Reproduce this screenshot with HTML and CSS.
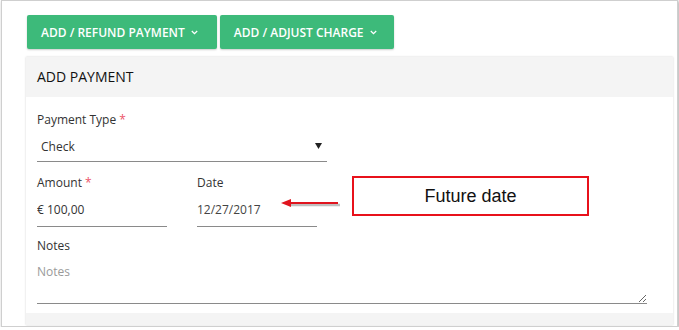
FILE: index.html
```html
<!DOCTYPE html>
<html lang="en">
<head>
    <meta charset="UTF-8">
    <meta name="viewport" content="width=device-width, initial-scale=1.0">
    <title>Add Payment</title>
    <link rel="stylesheet" href="styles.css">
</head>
<body>
    <div class="frame">

        <div class="actions">
            <button class="btn-green">ADD / REFUND PAYMENT
                <svg class="chevron" width="7" height="5" viewBox="0 0 7 5"><polyline points="0.8,1 3.5,3.6 6.2,1" fill="none" stroke="#fff" stroke-width="1.3"/></svg>
            </button>
            <button class="btn-green btn-narrow">ADD / ADJUST CHARGE
                <svg class="chevron" width="7" height="5" viewBox="0 0 7 5"><polyline points="0.8,1 3.5,3.6 6.2,1" fill="none" stroke="#fff" stroke-width="1.3"/></svg>
            </button>
        </div>

        <div class="card">
            <div class="card-header">ADD PAYMENT</div>

            <div class="card-body">
                <div class="field field-type">
                    <label>Payment Type <span class="req">*</span></label>
                    <div class="select-box">
                        <span>Check</span>
                        <svg width="7" height="6" viewBox="0 0 7 6"><polygon points="0,0 7,0 3.5,6" fill="#222"/></svg>
                    </div>
                </div>

                <div class="row">
                    <div class="field field-amount">
                        <label for="amount">Amount <span class="req">*</span></label>
                        <input type="text" id="amount" value="€ 100,00">
                    </div>
                    <div class="field field-date">
                        <label for="date">Date</label>
                        <input type="text" id="date" value="12/27/2017">
                    </div>
                </div>

                <div class="field field-notes">
                    <label for="notes">Notes</label>
                    <textarea id="notes" placeholder="Notes"></textarea>
                </div>
            </div>

            <div class="card-footer"></div>
        </div>

        <!-- annotation drawn over the screenshot -->
        <svg class="note-arrow" width="64" height="14" viewBox="0 0 64 14">
            <line x1="9" y1="8" x2="60" y2="8" stroke="rgba(0,0,0,0.25)" stroke-width="2.5"/>
            <line x1="8" y1="6" x2="58" y2="6" stroke="#e0141e" stroke-width="2"/>
            <polygon points="1,6 11,2 11,10" fill="#e0141e"/>
        </svg>
        <div class="note-box">Future date</div>

    </div>
</body>
</html>
```

FILE: styles.css
```css
*{
    margin: 0;
    padding: 0;
    box-sizing: border-box;
}
body{
    background-color: white;
    font-family: 'Open Sans', 'Liberation Sans', Arial, sans-serif;
    color: #333;
}
.frame{
    position: relative;
    width: 677px;
    height: 327px;
    margin-left: 1px;
    border: 1px solid #cfcfcf;
    box-shadow: 1px 1px 3px rgba(0, 0, 0, 0.35);
    padding: 14px 4px 0 24px;
    overflow: hidden;
    background-color: white;
}
.actions{
    display: flex;
    gap: 3px;
    padding-left: 1px;
}
.btn-green{
    display: flex;
    align-items: center;
    height: 34px;
    padding: 0 19px 0 14px;
    border: none;
    border-radius: 2px;
    background-color: #3dba7a;
    color: white;
    font-family: 'Open Sans', Arial, sans-serif;
    font-size: 12px;
    font-weight: 600;
    box-shadow: 0 1px 2px rgba(0, 0, 0, 0.2);
    cursor: pointer;
}
.btn-narrow{
    padding-right: 17px;
}
.chevron{
    margin-left: 6px;
}
.card{
    margin-top: 8px;
    background-color: white;
    box-shadow: 0 0 2px rgba(0, 0, 0, 0.18);
}
.card-header{
    height: 40px;
    padding-left: 11px;
    background-color: #f4f4f4;
    color: #111;
    font-size: 14px;
    line-height: 40px;
}
.card-body{
    padding: 15px 11px 9px 11px;
}
.field label{
    display: block;
    font-size: 12px;
    line-height: 16px;
    color: #333;
}
.req{
    color: #ec5468;
}
.select-box{
    display: flex;
    justify-content: space-between;
    align-items: center;
    width: 290px;
    height: 34px;
    padding: 3px 5px 0 4px;
    border-bottom: 1px solid #8a8a8a;
    font-size: 12px;
    color: #333;
}
.row{
    display: flex;
    gap: 30px;
    margin-top: 13px;
}
.field input{
    display: block;
    height: 36px;
    padding: 2px 0 0 0;
    border: none;
    border-bottom: 1px solid #8a8a8a;
    outline: none;
    font-family: 'Open Sans', Arial, sans-serif;
    font-size: 12px;
    color: #333;
    background: transparent;
}
.field-amount input{
    width: 130px;
}
.field-date input{
    width: 120px;
    color: #444;
}
.field-notes{
    margin-top: 11px;
}
.field-notes textarea{
    display: block;
    width: 610px;
    height: 50px;
    padding: 10px 0 0 0;
    border: none;
    border-bottom: 1px solid #8a8a8a;
    outline: none;
    resize: vertical;
    font-family: 'Open Sans', Arial, sans-serif;
    font-size: 12px;
    line-height: 16px;
    color: #333;
}
.field-notes textarea::placeholder{
    color: #9a9a9a;
}
.card-footer{
    height: 12px;
    background-color: #f4f4f4;
}
.note-arrow{
    position: absolute;
    left: 278px;
    top: 196px;
}
.note-box{
    position: absolute;
    left: 350px;
    top: 175px;
    width: 237px;
    height: 40px;
    border: 2px solid #e8111b;
    background-color: white;
    font-family: 'Liberation Sans', Arial, sans-serif;
    font-size: 18px;
    line-height: 36px;
    text-align: center;
    color: #111;
}
```
